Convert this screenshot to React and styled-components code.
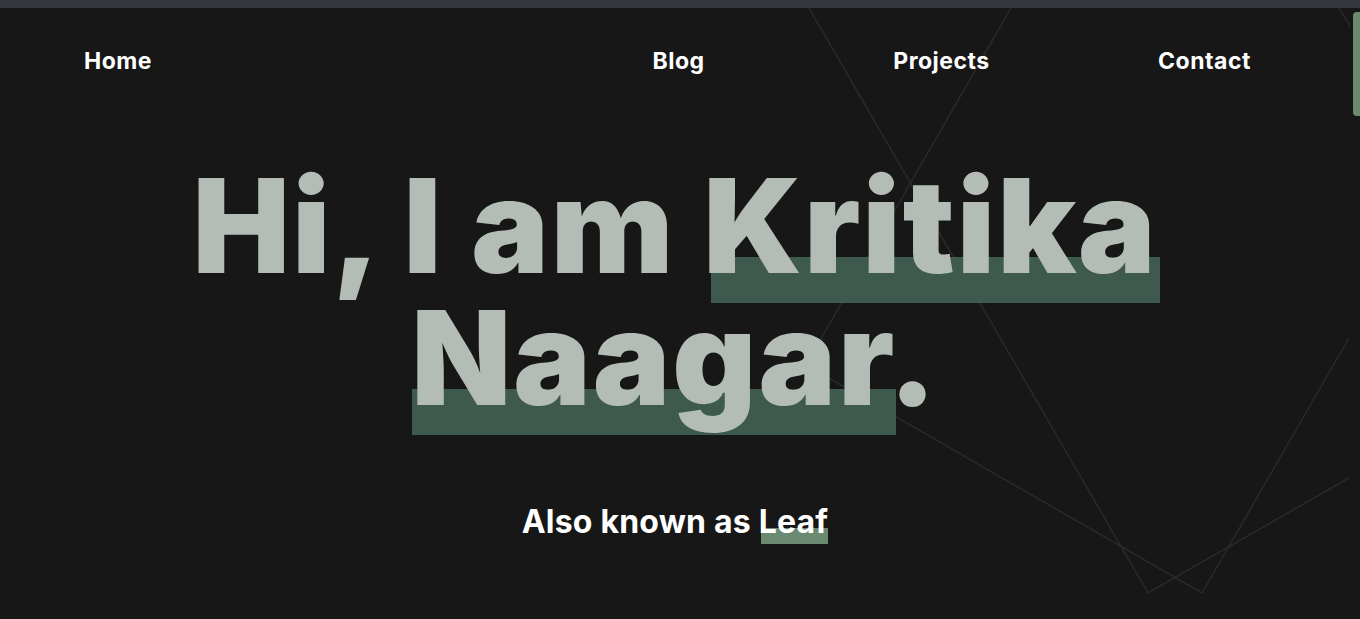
import styled, { createGlobalStyle } from 'styled-components';

const GlobalStyle = createGlobalStyle`
  html, body {
    margin: 0;
    padding: 0;
    background: #171717;
    overflow: hidden;
  }
  * { box-sizing: border-box; }
`;

const Frame = styled.div`
  display: flex;
  flex-direction: column;
  width: 100vw;
  height: 100vh;
  background: #171717;
  font-family: Inter, 'Open Sans', sans-serif;
`;

const TopStrip = styled.div`
  height: 8px;
  flex-shrink: 0;
  background: #35363b;
`;

const Body = styled.div`
  flex: 1;
  display: flex;
  min-height: 0;
`;

const Content = styled.main`
  flex: 1;
  position: relative;
  display: flex;
  flex-direction: column;
  overflow: hidden;
`;

const Backdrop = styled.svg`
  position: absolute;
  inset: 0;
  width: 100%;
  height: 100%;
  pointer-events: none;
`;

const Nav = styled.nav`
  position: relative;
  display: flex;
  align-items: center;
  justify-content: space-between;
  padding: 42px 14px 0 84px;
`;

const NavGroup = styled.div`
  display: flex;
`;

const NavLink = styled.a`
  display: block;
  width: ${(p) => (p.$wide ? '263px' : 'auto')};
  text-align: center;
  color: #ffffff;
  font-size: 23px;
  line-height: 22px;
  font-weight: 700;
  letter-spacing: 0.5px;
  text-decoration: none;
`;

const Hero = styled.section`
  position: relative;
  display: flex;
  flex-direction: column;
  align-items: center;
  margin-top: 88px;
`;

const Title = styled.h1`
  margin: 0;
  text-align: center;
  color: #b3bdb5;
  font-size: 130px;
  line-height: 132px;
  font-weight: 900;
  letter-spacing: 2px;
`;

const Mark = styled.span`
  position: relative;
  z-index: 0;

  &::before {
    content: '';
    position: absolute;
    z-index: -1;
    left: ${(p) => p.$left}px;
    right: ${(p) => p.$right}px;
    bottom: ${(p) => p.$bottom}px;
    height: ${(p) => p.$height}px;
    background: ${(p) => p.$color};
  }
`;

const Subtitle = styled.p`
  margin: 78px 0 0;
  color: #ffffff;
  font-size: 32px;
  line-height: 40px;
  font-weight: 700;
  letter-spacing: 0.2px;
`;

const ScrollTrack = styled.div`
  width: 10px;
  flex-shrink: 0;
  background: #171717;
  padding-top: 4px;
  display: flex;
  justify-content: flex-end;
`;

const ScrollThumb = styled.div`
  width: 7px;
  height: 104px;
  background: #6b8a72;
  border-radius: 4px 0 0 4px;
`;

export default function App() {
  return (
    <>
      <GlobalStyle />
      <Frame>
        <TopStrip />
        <Body>
          <Content>
            <Backdrop viewBox="0 0 1350 611" preserveAspectRatio="none">
              <g fill="none" stroke="#2a2a2a" strokeWidth="1.5">
                <polyline points="809,0 1148,585 1349,470" />
                <polyline points="1011,0 806,357 1202,585 1349,330" />
                <polyline points="1339,0 1352,21" />
              </g>
            </Backdrop>
            <Nav>
              <NavLink href="#">Home</NavLink>
              <NavGroup>
                <NavLink $wide href="#">Blog</NavLink>
                <NavLink $wide href="#">Projects</NavLink>
                <NavLink $wide href="#">Contact</NavLink>
              </NavGroup>
            </Nav>
            <Hero>
              <Title>
                Hi, I am{' '}
                <Mark $left={8} $right={-2} $bottom={1} $height={46} $color="#3e5a4f">
                  Kritika
                </Mark>
                <br />
                <Mark $left={1} $right={-8} $bottom={1} $height={46} $color="#3e5a4f">
                  Naagar
                </Mark>
                .
              </Title>
              <Subtitle>
                Also known as{' '}
                <Mark $left={2} $right={0} $bottom={-3} $height={16} $color="#6b8a72">
                  Leaf
                </Mark>
              </Subtitle>
            </Hero>
          </Content>
          <ScrollTrack>
            <ScrollThumb />
          </ScrollTrack>
        </Body>
      </Frame>
    </>
  );
}
